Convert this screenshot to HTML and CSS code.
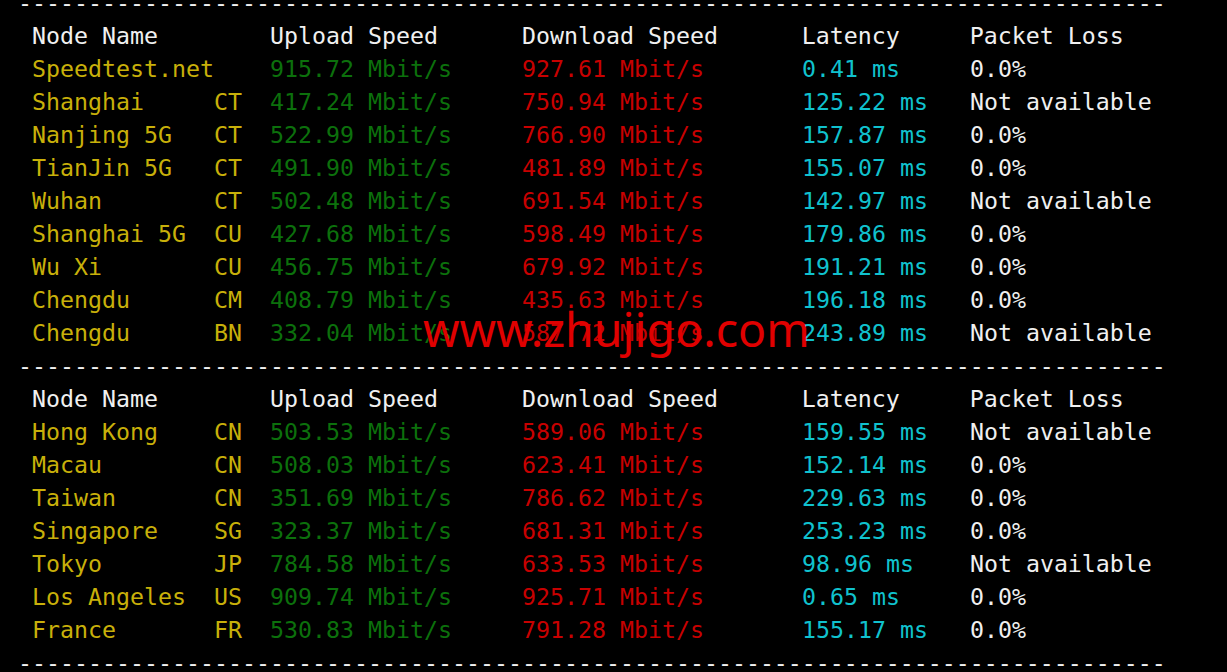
FILE: index.html
```html
<!DOCTYPE html>
<html lang="en">
<head>
    <meta charset="UTF-8">
    <title>Speedtest Result</title>
    <link rel="stylesheet" href="styles.css">
</head>
<body>
    <div class="terminal">
<div class="line rule">----------------------------------------------------------------------------------</div>
<div class="line head"> Node Name        Upload Speed      Download Speed      Latency     Packet Loss</div>
<div class="line"> <span class="node">Speedtest.net    </span><span class="up">915.72 Mbit/s     </span><span class="down">927.61 Mbit/s       </span><span class="lat">0.41 ms     </span><span class="loss">0.0%</span></div>
<div class="line"> <span class="node">Shanghai     CT  </span><span class="up">417.24 Mbit/s     </span><span class="down">750.94 Mbit/s       </span><span class="lat">125.22 ms   </span><span class="loss">Not available</span></div>
<div class="line"> <span class="node">Nanjing 5G   CT  </span><span class="up">522.99 Mbit/s     </span><span class="down">766.90 Mbit/s       </span><span class="lat">157.87 ms   </span><span class="loss">0.0%</span></div>
<div class="line"> <span class="node">TianJin 5G   CT  </span><span class="up">491.90 Mbit/s     </span><span class="down">481.89 Mbit/s       </span><span class="lat">155.07 ms   </span><span class="loss">0.0%</span></div>
<div class="line"> <span class="node">Wuhan        CT  </span><span class="up">502.48 Mbit/s     </span><span class="down">691.54 Mbit/s       </span><span class="lat">142.97 ms   </span><span class="loss">Not available</span></div>
<div class="line"> <span class="node">Shanghai 5G  CU  </span><span class="up">427.68 Mbit/s     </span><span class="down">598.49 Mbit/s       </span><span class="lat">179.86 ms   </span><span class="loss">0.0%</span></div>
<div class="line"> <span class="node">Wu Xi        CU  </span><span class="up">456.75 Mbit/s     </span><span class="down">679.92 Mbit/s       </span><span class="lat">191.21 ms   </span><span class="loss">0.0%</span></div>
<div class="line"> <span class="node">Chengdu      CM  </span><span class="up">408.79 Mbit/s     </span><span class="down">435.63 Mbit/s       </span><span class="lat">196.18 ms   </span><span class="loss">0.0%</span></div>
<div class="line"> <span class="node">Chengdu      BN  </span><span class="up">332.04 Mbit/s     </span><span class="down">587.72 Mbit/s       </span><span class="lat">243.89 ms   </span><span class="loss">Not available</span></div>
<div class="line rule">----------------------------------------------------------------------------------</div>
<div class="line head"> Node Name        Upload Speed      Download Speed      Latency     Packet Loss</div>
<div class="line"> <span class="node">Hong Kong    CN  </span><span class="up">503.53 Mbit/s     </span><span class="down">589.06 Mbit/s       </span><span class="lat">159.55 ms   </span><span class="loss">Not available</span></div>
<div class="line"> <span class="node">Macau        CN  </span><span class="up">508.03 Mbit/s     </span><span class="down">623.41 Mbit/s       </span><span class="lat">152.14 ms   </span><span class="loss">0.0%</span></div>
<div class="line"> <span class="node">Taiwan       CN  </span><span class="up">351.69 Mbit/s     </span><span class="down">786.62 Mbit/s       </span><span class="lat">229.63 ms   </span><span class="loss">0.0%</span></div>
<div class="line"> <span class="node">Singapore    SG  </span><span class="up">323.37 Mbit/s     </span><span class="down">681.31 Mbit/s       </span><span class="lat">253.23 ms   </span><span class="loss">0.0%</span></div>
<div class="line"> <span class="node">Tokyo        JP  </span><span class="up">784.58 Mbit/s     </span><span class="down">633.53 Mbit/s       </span><span class="lat">98.96 ms    </span><span class="loss">Not available</span></div>
<div class="line"> <span class="node">Los Angeles  US  </span><span class="up">909.74 Mbit/s     </span><span class="down">925.71 Mbit/s       </span><span class="lat">0.65 ms     </span><span class="loss">0.0%</span></div>
<div class="line"> <span class="node">France       FR  </span><span class="up">530.83 Mbit/s     </span><span class="down">791.28 Mbit/s       </span><span class="lat">155.17 ms   </span><span class="loss">0.0%</span></div>
<div class="line rule">----------------------------------------------------------------------------------</div>
    </div>
    <div class="watermark">www.zhujigo.com</div>
</body>
</html>
```

FILE: styles.css
```css
html, body {
    margin: 0;
    background: #000;
    height: 100%;
    overflow: hidden;
}
body {
    position: relative;
}
.terminal {
    margin-top: -14px;
    padding-left: 18px;
    font-family: "DejaVu Sans Mono", monospace;
    font-size: 23.25px;
    line-height: 33px;
    color: #f0f0f0;
}
.line {
    white-space: pre;
    height: 33px;
}
.node {
    color: #c8b00a;
}
.up {
    color: #0c700c;
}
.down {
    color: #c80000;
}
.lat {
    color: #10c2ce;
}
.loss {
    color: #f0f0f0;
}
.watermark {
    position: absolute;
    left: 423px;
    top: 306px;
    font-family: "Noto Sans", sans-serif;
    font-size: 46.5px;
    line-height: 46px;
    color: #e00000;
}
```
